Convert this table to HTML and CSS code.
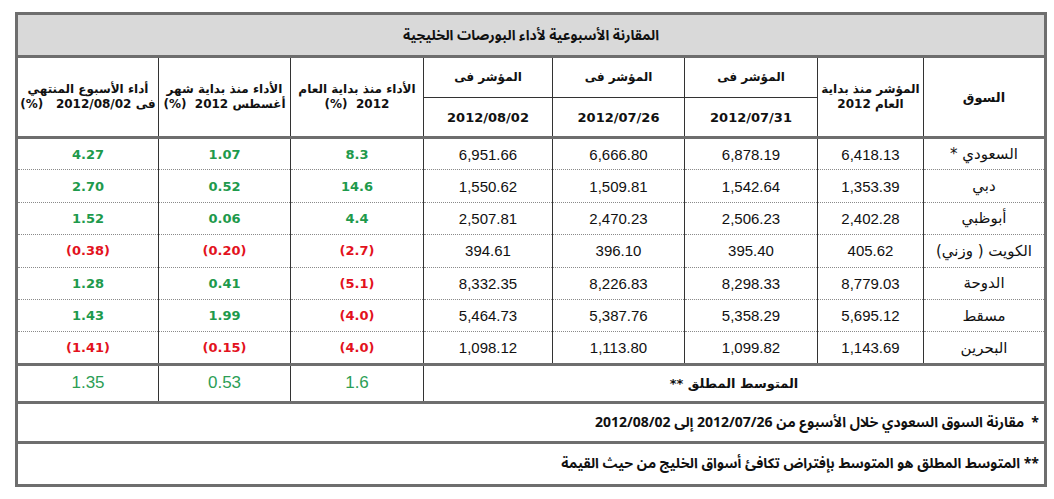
FILE: index.html
```html
<!DOCTYPE html>
<html lang="ar" dir="rtl">
<head>
<meta charset="utf-8">
<title>المقارنة الأسبوعية لأداء البورصات الخليجية</title>
<link rel="stylesheet" href="styles.css">
</head>
<body>
<table class="report">
  <colgroup>
    <col class="c-market">
    <col class="c-start">
    <col class="c-d1">
    <col class="c-d2">
    <col class="c-d3">
    <col class="c-ytd">
    <col class="c-aug">
    <col class="c-week">
  </colgroup>
  <tr class="r-title">
    <th colspan="8" class="title">المقارنة الأسبوعية لأداء البورصات الخليجية</th>
  </tr>
  <tr class="r-head1">
    <th rowspan="2" class="hd hd-market">السوق</th>
    <th rowspan="2" class="hd">المؤشر منذ بداية<br>العام 2012</th>
    <th class="hd">المؤشر فى</th>
    <th class="hd">المؤشر فى</th>
    <th class="hd">المؤشر فى</th>
    <th rowspan="2" class="hd">الأداء منذ بداية العام<br>2012&nbsp;&nbsp;(%)</th>
    <th rowspan="2" class="hd">الأداء منذ بداية شهر<br>أغسطس 2012&nbsp;&nbsp;(%)</th>
    <th rowspan="2" class="hd">أداء الأسبوع المنتهي<br>فى 2012/08/02&nbsp;&nbsp;&nbsp;(%)</th>
  </tr>
  <tr class="r-head2">
    <th class="hd date">2012/07/31</th>
    <th class="hd date">2012/07/26</th>
    <th class="hd date">2012/08/02</th>
  </tr>
  <tr class="row">
    <td class="name">السعودي *</td><td class="num">6,418.13</td><td class="num">6,878.19</td><td class="num">6,666.80</td><td class="num">6,951.66</td>
    <td class="pos">8.3</td><td class="pos">1.07</td><td class="pos">4.27</td>
  </tr>
  <tr class="row">
    <td class="name">دبي</td><td class="num">1,353.39</td><td class="num">1,542.64</td><td class="num">1,509.81</td><td class="num">1,550.62</td>
    <td class="pos">14.6</td><td class="pos">0.52</td><td class="pos">2.70</td>
  </tr>
  <tr class="row">
    <td class="name">أبوظبي</td><td class="num">2,402.28</td><td class="num">2,506.23</td><td class="num">2,470.23</td><td class="num">2,507.81</td>
    <td class="pos">4.4</td><td class="pos">0.06</td><td class="pos">1.52</td>
  </tr>
  <tr class="row">
    <td class="name">الكويت ( وزني)</td><td class="num">405.62</td><td class="num">395.40</td><td class="num">396.10</td><td class="num">394.61</td>
    <td class="neg">(2.7)</td><td class="neg">(0.20)</td><td class="neg">(0.38)</td>
  </tr>
  <tr class="row">
    <td class="name">الدوحة</td><td class="num">8,779.03</td><td class="num">8,298.33</td><td class="num">8,226.83</td><td class="num">8,332.35</td>
    <td class="neg">(5.1)</td><td class="pos">0.41</td><td class="pos">1.28</td>
  </tr>
  <tr class="row">
    <td class="name">مسقط</td><td class="num">5,695.12</td><td class="num">5,358.29</td><td class="num">5,387.76</td><td class="num">5,464.73</td>
    <td class="neg">(4.0)</td><td class="pos">1.99</td><td class="pos">1.43</td>
  </tr>
  <tr class="row last">
    <td class="name">البحرين</td><td class="num">1,143.69</td><td class="num">1,099.82</td><td class="num">1,113.80</td><td class="num">1,098.12</td>
    <td class="neg">(4.0)</td><td class="neg">(0.15)</td><td class="neg">(1.41)</td>
  </tr>
  <tr class="r-avg">
    <td colspan="5" class="avg-label">المتوسط المطلق **</td>
    <td class="avg">1.6</td><td class="avg">0.53</td><td class="avg">1.35</td>
  </tr>
  <tr class="r-note1">
    <td colspan="8" class="note">*&nbsp;&nbsp;مقارنة السوق السعودي خلال الأسبوع من 2012/07/26 إلى 2012/08/02</td>
  </tr>
  <tr class="r-note2">
    <td colspan="8" class="note">** المتوسط المطلق هو المتوسط بإفتراض تكافئ أسواق الخليج من حيث القيمة</td>
  </tr>
</table>
</body>
</html>
```
FILE: styles.css
```css
html, body {
  margin: 0;
  background: #ffffff;
}
body {
  padding: 12px 7px 0 15px;
  font-family: "DejaVu Sans", "Noto Sans", sans-serif;
  color: #111;
}
.report {
  width: 1032px;
  border-collapse: collapse;
  table-layout: fixed;
  border: 3px solid #6e6e6e;
}
.c-market { width: 122px; }
.c-start { width: 106px; }
.c-d1 { width: 133px; }
.c-d2 { width: 132px; }
.c-d3 { width: 129px; }
.c-ytd { width: 133px; }
.c-aug { width: 132px; }
.c-week { width: auto; }

th, td {
  padding: 0;
  text-align: center;
  vertical-align: middle;
  border-left: 1px solid #333;
  border-right: 1px solid #333;
}
.r-title { height: 43px; }
.title {
  background: #d9d9d9;
  font-family: "Noto Sans Arabic", "DejaVu Sans", sans-serif;
  font-size: 14px;
  font-weight: bold;
  border-bottom: 3px solid #6e6e6e;
}
.r-head1 { height: 41px; }
.r-head2 { height: 40px; }
.hd {
  font-size: 12px;
  font-weight: bold;
  line-height: 15px;
  border-bottom: 1px solid #333;
}
.hd-market { font-size: 13px; }
.r-head2 .hd, .r-head1 th[rowspan] {
  border-bottom: 3px solid #6e6e6e;
}
.date { font-size: 13px; }

.row { height: 32.4px; }
.row td {
  border-bottom: 1px dotted #8a8a8a;
}
.row.last td {
  border-bottom: 3px solid #6e6e6e;
}
.name {
  font-size: 15px;
}
.num {
  font-family: "Liberation Sans", Arial, sans-serif;
  font-size: 15px;
}
.pos, .neg {
  font-size: 13px;
  font-weight: bold;
}
.pos { color: #1e9a4c; }
.neg { color: #e3121d; }

.r-avg { height: 38px; }
.r-avg td { border-bottom: 3px solid #6e6e6e; }
.avg-label {
  font-size: 13px;
  font-weight: bold;
}
.avg {
  font-family: "Liberation Sans", Arial, sans-serif;
  font-size: 17px;
  color: #2c9e55;
}
.r-note1 { height: 40px; }
.r-note2 { height: 43px; }
.note {
  text-align: right;
  padding-right: 5px;
  font-family: "Noto Sans Arabic", "DejaVu Sans", sans-serif;
  font-size: 14px;
  font-weight: bold;
  border-bottom: 3px solid #6e6e6e;
}
```
